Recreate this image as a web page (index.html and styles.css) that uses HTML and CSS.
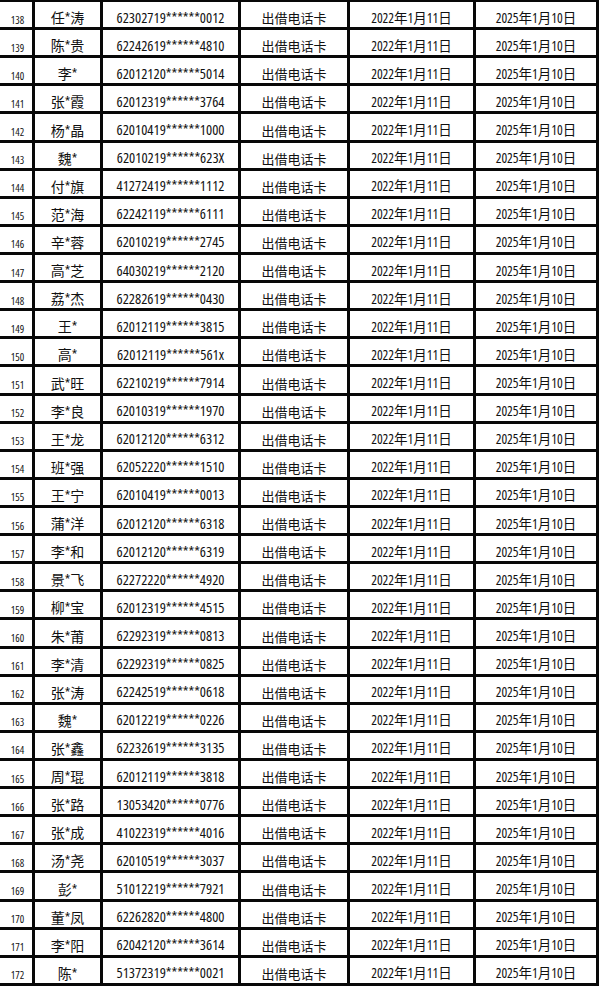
FILE: index.html
```html
<!DOCTYPE html>
<html lang="zh">
<head>
<meta charset="utf-8">
<link rel="stylesheet" href="styles.css">
</head>
<body>
<div class="sheet">
<div class="no">138</div><div>任*涛</div><div>62302719******0012</div><div>出借电话卡</div><div>2022年1月11日</div><div>2025年1月10日</div>
<div class="no">139</div><div>陈*贵</div><div>62242619******4810</div><div>出借电话卡</div><div>2022年1月11日</div><div>2025年1月10日</div>
<div class="no">140</div><div>李*</div><div>62012120******5014</div><div>出借电话卡</div><div>2022年1月11日</div><div>2025年1月10日</div>
<div class="no">141</div><div>张*霞</div><div>62012319******3764</div><div>出借电话卡</div><div>2022年1月11日</div><div>2025年1月10日</div>
<div class="no">142</div><div>杨*晶</div><div>62010419******1000</div><div>出借电话卡</div><div>2022年1月11日</div><div>2025年1月10日</div>
<div class="no">143</div><div>魏*</div><div>62010219******623X</div><div>出借电话卡</div><div>2022年1月11日</div><div>2025年1月10日</div>
<div class="no">144</div><div>付*旗</div><div>41272419******1112</div><div>出借电话卡</div><div>2022年1月11日</div><div>2025年1月10日</div>
<div class="no">145</div><div>范*海</div><div>62242119******6111</div><div>出借电话卡</div><div>2022年1月11日</div><div>2025年1月10日</div>
<div class="no">146</div><div>辛*蓉</div><div>62010219******2745</div><div>出借电话卡</div><div>2022年1月11日</div><div>2025年1月10日</div>
<div class="no">147</div><div>高*芝</div><div>64030219******2120</div><div>出借电话卡</div><div>2022年1月11日</div><div>2025年1月10日</div>
<div class="no">148</div><div>荔*杰</div><div>62282619******0430</div><div>出借电话卡</div><div>2022年1月11日</div><div>2025年1月10日</div>
<div class="no">149</div><div>王*</div><div>62012119******3815</div><div>出借电话卡</div><div>2022年1月11日</div><div>2025年1月10日</div>
<div class="no">150</div><div>高*</div><div>62012119******561x</div><div>出借电话卡</div><div>2022年1月11日</div><div>2025年1月10日</div>
<div class="no">151</div><div>武*旺</div><div>62210219******7914</div><div>出借电话卡</div><div>2022年1月11日</div><div>2025年1月10日</div>
<div class="no">152</div><div>李*良</div><div>62010319******1970</div><div>出借电话卡</div><div>2022年1月11日</div><div>2025年1月10日</div>
<div class="no">153</div><div>王*龙</div><div>62012120******6312</div><div>出借电话卡</div><div>2022年1月11日</div><div>2025年1月10日</div>
<div class="no">154</div><div>班*强</div><div>62052220******1510</div><div>出借电话卡</div><div>2022年1月11日</div><div>2025年1月10日</div>
<div class="no">155</div><div>王*宁</div><div>62010419******0013</div><div>出借电话卡</div><div>2022年1月11日</div><div>2025年1月10日</div>
<div class="no">156</div><div>蒲*洋</div><div>62012120******6318</div><div>出借电话卡</div><div>2022年1月11日</div><div>2025年1月10日</div>
<div class="no">157</div><div>李*和</div><div>62012120******6319</div><div>出借电话卡</div><div>2022年1月11日</div><div>2025年1月10日</div>
<div class="no">158</div><div>景*飞</div><div>62272220******4920</div><div>出借电话卡</div><div>2022年1月11日</div><div>2025年1月10日</div>
<div class="no">159</div><div>柳*宝</div><div>62012319******4515</div><div>出借电话卡</div><div>2022年1月11日</div><div>2025年1月10日</div>
<div class="no">160</div><div>朱*莆</div><div>62292319******0813</div><div>出借电话卡</div><div>2022年1月11日</div><div>2025年1月10日</div>
<div class="no">161</div><div>李*清</div><div>62292319******0825</div><div>出借电话卡</div><div>2022年1月11日</div><div>2025年1月10日</div>
<div class="no">162</div><div>张*涛</div><div>62242519******0618</div><div>出借电话卡</div><div>2022年1月11日</div><div>2025年1月10日</div>
<div class="no">163</div><div>魏*</div><div>62012219******0226</div><div>出借电话卡</div><div>2022年1月11日</div><div>2025年1月10日</div>
<div class="no">164</div><div>张*鑫</div><div>62232619******3135</div><div>出借电话卡</div><div>2022年1月11日</div><div>2025年1月10日</div>
<div class="no">165</div><div>周*琨</div><div>62012119******3818</div><div>出借电话卡</div><div>2022年1月11日</div><div>2025年1月10日</div>
<div class="no">166</div><div>张*路</div><div>13053420******0776</div><div>出借电话卡</div><div>2022年1月11日</div><div>2025年1月10日</div>
<div class="no">167</div><div>张*成</div><div>41022319******4016</div><div>出借电话卡</div><div>2022年1月11日</div><div>2025年1月10日</div>
<div class="no">168</div><div>汤*尧</div><div>62010519******3037</div><div>出借电话卡</div><div>2022年1月11日</div><div>2025年1月10日</div>
<div class="no">169</div><div>彭*</div><div>51012219******7921</div><div>出借电话卡</div><div>2022年1月11日</div><div>2025年1月10日</div>
<div class="no">170</div><div>董*凤</div><div>62262820******4800</div><div>出借电话卡</div><div>2022年1月11日</div><div>2025年1月10日</div>
<div class="no">171</div><div>李*阳</div><div>62042120******3614</div><div>出借电话卡</div><div>2022年1月11日</div><div>2025年1月10日</div>
<div class="no">172</div><div>陈*</div><div>51372319******0021</div><div>出借电话卡</div><div>2022年1月11日</div><div>2025年1月10日</div>
</div>
</body>
</html>
```
FILE: styles.css
```css
html, body {
  margin: 0;
  padding: 0;
  background: #fff;
  overflow: hidden;
}

.sheet {
  display: grid;
  grid-template-columns: 32px 65px 135px 106px 123px 120px;
  grid-auto-rows: 25.12px;
  gap: 3px;
  padding: 3px;
  background: #080808;
  margin: -1px 0 0 -3px;
  width: max-content;
  font-family: "Open Sans", "Noto Sans CJK SC", sans-serif;
  font-stretch: 75%;
  color: #111;
}

.sheet > div {
  background: #fff;
  display: flex;
  align-items: flex-end;
  justify-content: center;
  padding-bottom: 2px;
  font-size: 13.5px;
  line-height: 1;
  white-space: nowrap;
}

.sheet > div:nth-child(6n+2) {
  font-size: 14px;
}

.sheet > div:nth-child(6n+3) {
  font-size: 14.5px;
}

.sheet > div:nth-child(6n+4) {
  font-size: 13px;
}

.sheet > .no {
  font-size: 10.5px;
  padding-left: 3px;
}
```
